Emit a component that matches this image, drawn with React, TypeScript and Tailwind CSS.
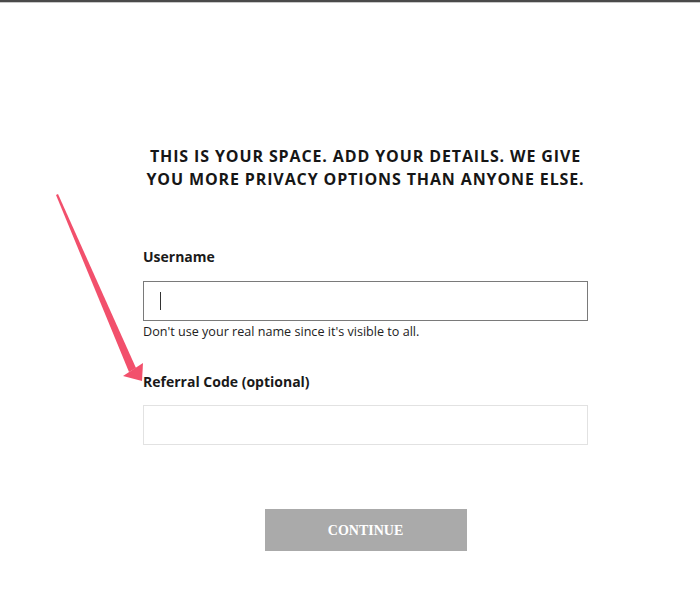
export default function App() {
  return (
    <div
      className="relative w-[700px] h-[614px] bg-white border-t-2 border-t-[#4a4a4a] overflow-hidden"
      style={{ fontFamily: '"Open Sans", sans-serif' }}
    >
      <div className="h-px bg-[#c8c8c8]" />
      <div className="ml-[143px] w-[445px] pt-[142px] flex flex-col">
        <h1 className="text-center text-[16px] leading-[23px] font-bold tracking-[0.055em] text-[#161616] uppercase">
          This is your space. Add your details. We give
          <br />
          you more privacy options than anyone else.
        </h1>

        <label className="mt-[56px] text-[14px] leading-[20px] font-bold text-[#1a1a1a]">
          Username
        </label>
        <div className="mt-[14px] h-[40px] border border-[#7a7a7a] flex items-center pl-[16px]">
          <span className="w-px h-[18px] bg-[#333]" />
        </div>
        <p className="mt-[2px] text-[12.6px] leading-[18px] text-[#222]">
          Don't use your real name since it's visible to all.
        </p>

        <label className="mt-[31px] text-[14px] leading-[20px] font-bold text-[#1a1a1a]">
          Referral Code (optional)
        </label>
        <div className="mt-[13px] h-[40px] border border-[#e2e2e2]" />

        <div className="mt-[64px] flex justify-center">
          <button
            className="w-[202px] h-[42px] bg-[#aaaaaa] text-white text-[14px] font-bold"
            style={{ fontFamily: '"Liberation Serif", serif' }}
          >
            CONTINUE
          </button>
        </div>
      </div>

      <svg
        className="absolute left-0 top-0 pointer-events-none"
        width="700"
        height="614"
        viewBox="0 0 700 614"
      >
        <polygon points="56,193 58,192 136,366 129,370" fill="#f2506c" />
        <polygon points="123,374 143,361 142,379" fill="#f2506c" />
      </svg>
    </div>
  );
}
